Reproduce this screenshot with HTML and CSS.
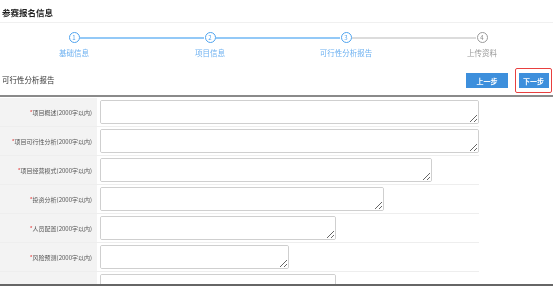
FILE: index.html
```html
<!DOCTYPE html>
<html lang="zh-CN">
<head>
    <meta charset="UTF-8">
    <meta name="viewport" content="width=device-width, initial-scale=1.0">
    <title>参赛报名信息</title>
    <link rel="stylesheet" href="styles.css">
</head>
<body>
<div class="page">
    <h1 class="page-title">参赛报名信息</h1>

    <div class="steps">
        <div class="step done">
            <span class="step-num">1</span>
            <span class="step-label">基础信息</span>
        </div>
        <div class="step done">
            <span class="step-num">2</span>
            <span class="step-label">项目信息</span>
        </div>
        <div class="step current">
            <span class="step-num">3</span>
            <span class="step-label">可行性分析报告</span>
        </div>
        <div class="step">
            <span class="step-num">4</span>
            <span class="step-label">上传资料</span>
        </div>
    </div>

    <div class="toolbar">
        <h2 class="section-title">可行性分析报告</h2>
        <div class="actions">
            <button class="btn">上一步</button>
            <span class="highlight"><button class="btn">下一步</button></span>
        </div>
    </div>

    <table class="form-table">
        <tr>
            <td class="label"><span class="req">*</span>项目概述(2000字以内)</td>
            <td><textarea class="field w1"></textarea></td>
        </tr>
        <tr>
            <td class="label"><span class="req">*</span>项目可行性分析(2000字以内)</td>
            <td><textarea class="field w1"></textarea></td>
        </tr>
        <tr>
            <td class="label"><span class="req">*</span>项目经营模式(2000字以内)</td>
            <td><textarea class="field w2"></textarea></td>
        </tr>
        <tr>
            <td class="label"><span class="req">*</span>投资分析(2000字以内)</td>
            <td><textarea class="field w3"></textarea></td>
        </tr>
        <tr>
            <td class="label"><span class="req">*</span>人员配置(2000字以内)</td>
            <td><textarea class="field w4"></textarea></td>
        </tr>
        <tr>
            <td class="label"><span class="req">*</span>风险预测(2000字以内)</td>
            <td><textarea class="field w5"></textarea></td>
        </tr>
        <tr>
            <td class="label"></td>
            <td><textarea class="field w4"></textarea></td>
        </tr>
    </table>
</div>
</body>
</html>
```

FILE: styles.css
```css
body {
    margin: 0;
    font-family: "Noto Sans CJK SC", "Noto Sans", sans-serif;
    background-color: #fff;
    color: #333;
}
.page {
    height: 286px;
    box-sizing: border-box;
    overflow: hidden;
    border-bottom: 2px solid #666;
}
.page-title {
    margin: 0;
    height: 22px;
    padding-left: 2px;
    font-size: 8.5px;
    line-height: 24px;
    font-weight: bold;
    color: #222;
    border-bottom: 1px solid #f0f0f0;
}
.steps {
    display: flex;
    padding: 9px 0 0 6px;
    height: 33px;
}
.step {
    position: relative;
    width: 136px;
    display: flex;
    flex-direction: column;
    align-items: center;
}
.step::after {
    content: "";
    position: absolute;
    left: 74px;
    top: 5px;
    width: 124px;
    height: 2px;
    background-color: #93c9f7;
}
.step.current::after {
    background-color: #dcdcdc;
}
.step:last-child::after {
    display: none;
}
.step-num {
    width: 9px;
    height: 9px;
    border: 1.5px solid #4fa3ee;
    border-radius: 50%;
    font-size: 6px;
    line-height: 9px;
    text-align: center;
    color: #4fa3ee;
    background-color: #fff;
}
.step-label {
    margin-top: 4px;
    font-size: 7.5px;
    color: #6db1f1;
}
.step:last-child .step-num {
    border-color: #999;
    color: #888;
}
.step:last-child .step-label {
    color: #999;
}
.toolbar {
    display: flex;
    justify-content: space-between;
    align-items: center;
    height: 29px;
    margin-top: 1px;
    border-bottom: 2px solid #8a8a8a;
}
.section-title {
    margin: 0 0 2px 2px;
    font-size: 7.5px;
    font-weight: normal;
    color: #333;
}
.actions {
    display: flex;
    align-items: center;
    gap: 7px;
    padding-right: 1px;
}
.btn {
    width: 42px;
    height: 15px;
    padding: 0;
    border: none;
    background-color: #3d8fdc;
    color: #fff;
    font-family: inherit;
    font-size: 7px;
    font-weight: bold;
    cursor: pointer;
}
.highlight {
    display: flex;
    align-items: center;
    justify-content: center;
    width: 35px;
    height: 23px;
    border: 1.5px solid #e8403f;
    border-radius: 2px;
}
.highlight .btn {
    width: 30px;
}
.form-table {
    border-collapse: collapse;
    margin-top: 1px;
}
.form-table td {
    height: 28px;
    padding: 0;
    border-bottom: 1px solid #eeeeee;
}
.label {
    width: 92px;
    padding-right: 5px !important;
    background-color: #f3f3f3;
    text-align: right;
    font-size: 6px;
    color: #555;
    white-space: nowrap;
}
.req {
    color: #e23b3b;
}
.field {
    display: block;
    height: 24px;
    margin-left: 3px;
    box-sizing: border-box;
    border: 1px solid #cfcfcf;
    border-radius: 2px;
    font-family: inherit;
}
.w1 { width: 379px; }
.w2 { width: 332px; }
.w3 { width: 284px; }
.w4 { width: 236px; }
.w5 { width: 189px; }
```
